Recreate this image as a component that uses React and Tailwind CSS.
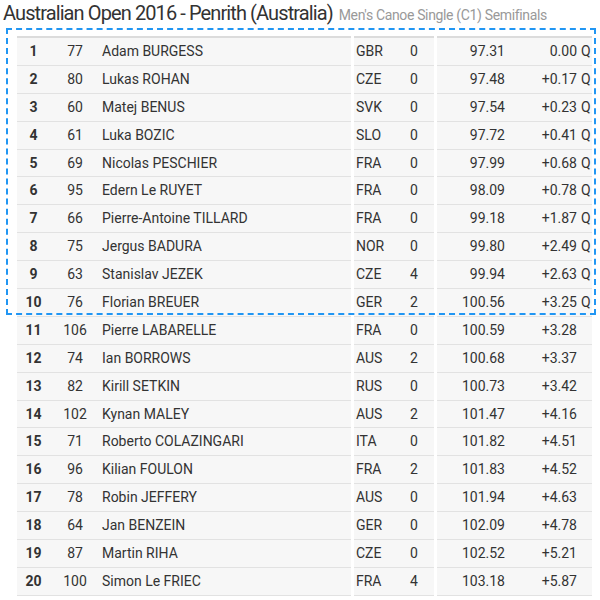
import React from 'react';

const results = [
    [1, 77, 'Adam BURGESS', 'GBR', 0, '97.31', '0.00', true],
    [2, 80, 'Lukas ROHAN', 'CZE', 0, '97.48', '+0.17', true],
    [3, 60, 'Matej BENUS', 'SVK', 0, '97.54', '+0.23', true],
    [4, 61, 'Luka BOZIC', 'SLO', 0, '97.72', '+0.41', true],
    [5, 69, 'Nicolas PESCHIER', 'FRA', 0, '97.99', '+0.68', true],
    [6, 95, 'Edern Le RUYET', 'FRA', 0, '98.09', '+0.78', true],
    [7, 66, 'Pierre-Antoine TILLARD', 'FRA', 0, '99.18', '+1.87', true],
    [8, 75, 'Jergus BADURA', 'NOR', 0, '99.80', '+2.49', true],
    [9, 63, 'Stanislav JEZEK', 'CZE', 4, '99.94', '+2.63', true],
    [10, 76, 'Florian BREUER', 'GER', 2, '100.56', '+3.25', true],
    [11, 106, 'Pierre LABARELLE', 'FRA', 0, '100.59', '+3.28', false],
    [12, 74, 'Ian BORROWS', 'AUS', 2, '100.68', '+3.37', false],
    [13, 82, 'Kirill SETKIN', 'RUS', 0, '100.73', '+3.42', false],
    [14, 102, 'Kynan MALEY', 'AUS', 2, '101.47', '+4.16', false],
    [15, 71, 'Roberto COLAZINGARI', 'ITA', 0, '101.82', '+4.51', false],
    [16, 96, 'Kilian FOULON', 'FRA', 2, '101.83', '+4.52', false],
    [17, 78, 'Robin JEFFERY', 'AUS', 0, '101.94', '+4.63', false],
    [18, 64, 'Jan BENZEIN', 'GER', 0, '102.09', '+4.78', false],
    [19, 87, 'Martin RIHA', 'CZE', 0, '102.52', '+5.21', false],
    [20, 100, 'Simon Le FRIEC', 'FRA', 4, '103.18', '+5.87', false],
];

const Row = ({ r }) => {
    const [rank, bib, name, nat, pen, time, diff, q] = r;
    return (
        <div className="flex gap-[3px] h-[27.9px]">
            <div className="flex items-center w-[334px] bg-[#f7f7f7] border-b border-[#e2e2e2]">
                <div className="w-[33px] text-center font-bold">{rank}</div>
                <div className="w-[50px] text-center">{bib}</div>
                <div className="pl-[2px]">{name}</div>
            </div>
            <div className="flex items-center w-[80px] bg-[#f7f7f7] border-b border-[#e2e2e2]">
                <div className="w-[44px] pl-[2px]">{nat}</div>
                <div className="w-[32px] text-center">{pen}</div>
            </div>
            <div className="flex items-center flex-1 bg-[#f7f7f7] border-b border-[#e2e2e2]">
                <div className="w-[68px] text-right">{time}</div>
                <div className="w-[72px] text-right">{diff}</div>
                <div className="pl-[4px]">{q ? 'Q' : ''}</div>
            </div>
        </div>
    );
};

export default function App() {
    return (
        <div className="w-[600px] h-[600px] bg-white text-[#333] overflow-hidden" style={{ fontFamily: 'Roboto, "Liberation Sans", sans-serif' }}>
            <div className="flex items-baseline h-[35.5px] pl-[3px] pt-[1px]">
                <span className="text-[20px] leading-[24px] tracking-[-0.045em]">Australian Open 2016 - Penrith (Australia)</span>
                <span className="ml-[6px] text-[14px] text-[#999] tracking-[-0.025em]">Men's Canoe Single (C1) Semifinals</span>
            </div>
            <div className="relative ml-[17px] w-[575px] text-[14px]">
                <div className="flex gap-[3px] h-[2.5px]">
                    <div className="w-[334px] bg-[#dcdcdc]" />
                    <div className="w-[80px] bg-[#dcdcdc]" />
                    <div className="flex-1 bg-[#dcdcdc]" />
                </div>
                {results.map(r => (
                    <Row key={r[0]} r={r} />
                ))}
                <div className="absolute left-[-11px] top-[-8px] w-[590px] h-[287px] border-2 border-dashed border-[#2196f3] pointer-events-none" />
            </div>
        </div>
    );
}
